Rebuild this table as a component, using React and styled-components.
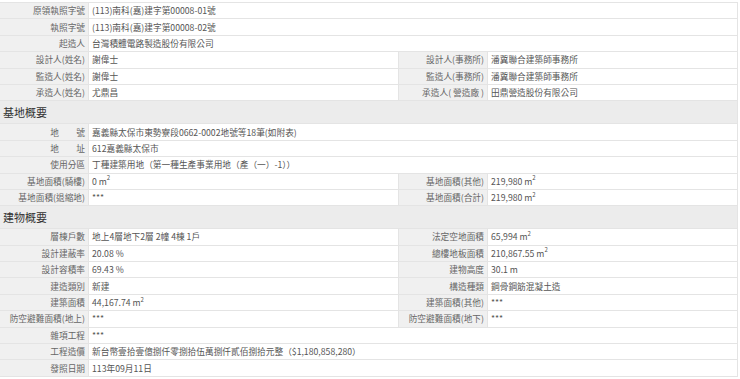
import styled, { createGlobalStyle } from 'styled-components';

const GlobalStyle = createGlobalStyle`
  body {
    margin: 0;
    background: #fff;
    font-family: 'Noto Sans CJK TC', 'Noto Sans', sans-serif;
  }
`;

const Sheet = styled.div`
  width: 738px;
  margin-top: 2px;
  border-top: 1px solid #e4e4e4;
  border-right: 1px solid #e4e4e4;
  box-sizing: border-box;
  font-size: 8.7px;
  color: #555;
`;

const Row = styled.div`
  display: grid;
  grid-template-columns: ${(p) => (p.pair ? '89px 309px 90px 1fr' : '89px 1fr')};
  height: 16.4px;
  box-sizing: border-box;
  border-bottom: 1px solid #e4e4e4;
`;

const Label = styled.div`
  display: flex;
  align-items: center;
  justify-content: flex-end;
  padding-right: 3px;
  background: #f0f0f0;
  border-right: 1px solid #e4e4e4;
  border-left: ${(p) => (p.second ? '1px solid #e4e4e4' : 'none')};
  color: #666;
  white-space: pre;
`;

const Value = styled.div`
  display: flex;
  align-items: center;
  padding-left: 3px;
  white-space: nowrap;
`;

const SectionHeader = styled.div`
  height: 23px;
  display: flex;
  align-items: center;
  padding-left: 3px;
  background: #ececec;
  border-bottom: 1px solid #e4e4e4;
  box-sizing: border-box;
  font-size: 11px;
  color: #333;
`;

const Sup = styled.span`
  display: inline-block;
  font-size: 6px;
  line-height: 1;
  transform: translateY(-3px);
`;

const M2 = () => (
  <>
    m<Sup>2</Sup>
  </>
);

const Full = ({ label, children }) => (
  <Row>
    <Label>{label}</Label>
    <Value>{children}</Value>
  </Row>
);

const Pair = ({ l1, v1, l2, v2 }) => (
  <Row pair>
    <Label>{l1}</Label>
    <Value>{v1}</Value>
    <Label second>{l2}</Label>
    <Value>{v2}</Value>
  </Row>
);

export default function App() {
  return (
    <>
      <GlobalStyle />
      <Sheet>
        <Full label="原領執照字號">(113)南科(嘉)建字第00008-01號</Full>
        <Full label="執照字號">(113)南科(嘉)建字第00008-02號</Full>
        <Full label="起造人">台灣積體電路製造股份有限公司</Full>
        <Pair l1="設計人(姓名)" v1="謝偉士" l2="設計人(事務所)" v2="潘冀聯合建築師事務所" />
        <Pair l1="監造人(姓名)" v1="謝偉士" l2="監造人(事務所)" v2="潘冀聯合建築師事務所" />
        <Pair l1="承造人(姓名)" v1="尤鼎昌" l2="承造人( 營造廠 )" v2="田鼎營造股份有限公司" />

        <SectionHeader>基地概要</SectionHeader>
        <Full label="地　　號">嘉義縣太保市東勢寮段0662-0002地號等18筆(如附表)</Full>
        <Full label="地　　址">612嘉義縣太保市</Full>
        <Full label="使用分區">丁種建築用地（第一種生產事業用地（產（一）-1））</Full>
        <Pair l1="基地面積(騎樓)" v1={<>0 <M2 /></>} l2="基地面積(其他)" v2={<>219,980 <M2 /></>} />
        <Pair l1="基地面積(退縮地)" v1="***" l2="基地面積(合計)" v2={<>219,980 <M2 /></>} />

        <SectionHeader>建物概要</SectionHeader>
        <Pair l1="層棟戶數" v1="地上4層地下2層 2幢 4棟 1戶" l2="法定空地面積" v2={<>65,994 <M2 /></>} />
        <Pair l1="設計建蔽率" v1="20.08 %" l2="總樓地板面積" v2={<>210,867.55 <M2 /></>} />
        <Pair l1="設計容積率" v1="69.43 %" l2="建物高度" v2="30.1 m" />
        <Pair l1="建造類別" v1="新建" l2="構造種類" v2="鋼骨鋼筋混凝土造" />
        <Pair l1="建築面積" v1={<>44,167.74 <M2 /></>} l2="建築面積(其他)" v2="***" />
        <Pair l1="防空避難面積(地上)" v1="***" l2="防空避難面積(地下)" v2="***" />
        <Full label="雜項工程">***</Full>
        <Full label="工程造價">新台幣壹拾壹億捌仟零捌拾伍萬捌仟貳佰捌拾元整（$1,180,858,280）</Full>
        <Full label="發照日期">113年09月11日</Full>
      </Sheet>
    </>
  );
}
